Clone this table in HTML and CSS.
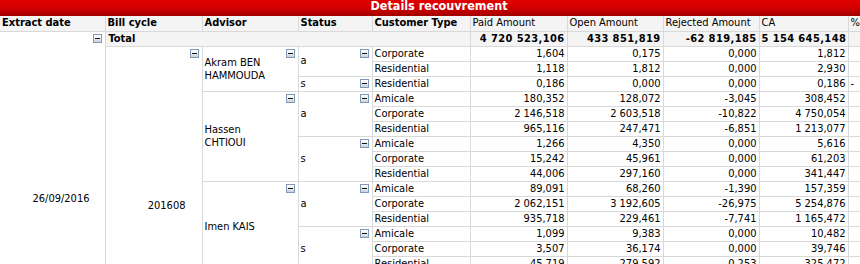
FILE: index.html
```html
<!DOCTYPE html>
<html lang="fr">
<head>
<meta charset="utf-8">
<title>Details recouvrement</title>
<link rel="stylesheet" href="styles.css">
</head>
<body>
<div class="pivot">
  <div class="caption">Details recouvrement</div>
  <table class="grid">
    <colgroup>
      <col class="c-date"><col class="c-bill"><col class="c-adv"><col class="c-stat"><col class="c-type">
      <col class="c-num"><col class="c-num2"><col class="c-num3"><col class="c-ca"><col class="c-pct">
    </colgroup>
    <thead>
      <tr>
        <th class="dim first">Extract date</th>
        <th class="dim">Bill cycle</th>
        <th class="dim">Advisor</th>
        <th class="dim">Status</th>
        <th class="dim">Customer Type</th>
        <th class="exp">Paid Amount</th>
        <th class="exp">Open Amount</th>
        <th class="exp">Rejected Amount</th>
        <th class="exp">CA</th>
        <th class="exp">%</th>
      </tr>
    </thead>
    <tbody>
      <tr class="total">
        <td class="date first" rowspan="16"><span class="tog"></span><div class="date-val">26/09/2016</div></td>
        <td class="total-label" colspan="4">Total</td>
        <td class="num">4 720 523,106</td>
        <td class="num">433 851,819</td>
        <td class="num">-62 819,185</td>
        <td class="num">5 154 645,148</td>
        <td class="pct"></td>
      </tr>
      <tr>
        <td class="bill" rowspan="15"><span class="tog"></span><div class="bill-val">201608</div></td>
        <td class="adv" rowspan="3"><span class="tog"></span>Akram BEN HAMMOUDA</td>
        <td class="stat" rowspan="2"><span class="tog"></span>a</td>
        <td class="type">Corporate</td>
        <td class="num">1,604</td><td class="num">0,175</td><td class="num">0,000</td><td class="num">1,812</td><td class="pct"></td>
      </tr>
      <tr>
        <td class="type">Residential</td>
        <td class="num">1,118</td><td class="num">1,812</td><td class="num">0,000</td><td class="num">2,930</td><td class="pct"></td>
      </tr>
      <tr>
        <td class="stat"><span class="tog"></span>s</td>
        <td class="type">Residential</td>
        <td class="num">0,186</td><td class="num">0,000</td><td class="num">0,000</td><td class="num">0,186</td><td class="pct">-</td>
      </tr>
      <tr>
        <td class="adv" rowspan="6"><span class="tog"></span>Hassen CHTIOUI</td>
        <td class="stat" rowspan="3"><span class="tog"></span>a</td>
        <td class="type">Amicale</td>
        <td class="num">180,352</td><td class="num">128,072</td><td class="num">-3,045</td><td class="num">308,452</td><td class="pct"></td>
      </tr>
      <tr>
        <td class="type">Corporate</td>
        <td class="num">2 146,518</td><td class="num">2 603,518</td><td class="num">-10,822</td><td class="num">4 750,054</td><td class="pct"></td>
      </tr>
      <tr>
        <td class="type">Residential</td>
        <td class="num">965,116</td><td class="num">247,471</td><td class="num">-6,851</td><td class="num">1 213,077</td><td class="pct"></td>
      </tr>
      <tr>
        <td class="stat" rowspan="3"><span class="tog"></span>s</td>
        <td class="type">Amicale</td>
        <td class="num">1,266</td><td class="num">4,350</td><td class="num">0,000</td><td class="num">5,616</td><td class="pct"></td>
      </tr>
      <tr>
        <td class="type">Corporate</td>
        <td class="num">15,242</td><td class="num">45,961</td><td class="num">0,000</td><td class="num">61,203</td><td class="pct"></td>
      </tr>
      <tr>
        <td class="type">Residential</td>
        <td class="num">44,006</td><td class="num">297,160</td><td class="num">0,000</td><td class="num">341,447</td><td class="pct"></td>
      </tr>
      <tr>
        <td class="adv" rowspan="6"><span class="tog"></span>Imen KAIS</td>
        <td class="stat" rowspan="3"><span class="tog"></span>a</td>
        <td class="type">Amicale</td>
        <td class="num">89,091</td><td class="num">68,260</td><td class="num">-1,390</td><td class="num">157,359</td><td class="pct"></td>
      </tr>
      <tr>
        <td class="type">Corporate</td>
        <td class="num">2 062,151</td><td class="num">3 192,605</td><td class="num">-26,975</td><td class="num">5 254,876</td><td class="pct"></td>
      </tr>
      <tr>
        <td class="type">Residential</td>
        <td class="num">935,718</td><td class="num">229,461</td><td class="num">-7,741</td><td class="num">1 165,472</td><td class="pct"></td>
      </tr>
      <tr>
        <td class="stat" rowspan="3"><span class="tog"></span>s</td>
        <td class="type">Amicale</td>
        <td class="num">1,099</td><td class="num">9,383</td><td class="num">0,000</td><td class="num">10,482</td><td class="pct"></td>
      </tr>
      <tr>
        <td class="type">Corporate</td>
        <td class="num">3,507</td><td class="num">36,174</td><td class="num">0,000</td><td class="num">39,746</td><td class="pct"></td>
      </tr>
      <tr>
        <td class="type">Residential</td>
        <td class="num">45,719</td><td class="num">279,592</td><td class="num">-0,253</td><td class="num">325,472</td><td class="pct"></td>
      </tr>
    </tbody>
  </table>
</div>
</body>
</html>
```

FILE: styles.css
```css
html, body {
  margin: 0;
  padding: 0;
  background: #ffffff;
  overflow: hidden;
}

body {
  font-family: "DejaVu Sans Condensed", "DejaVu Sans", sans-serif;
  font-size: 11px;
  color: #000000;
}

.pivot {
  width: 878px;
}

.caption {
  height: 16px;
  background: linear-gradient(to bottom, #e20000 0%, #d00000 50%, #a20000 100%);
  color: #ffffff;
  font-weight: bold;
  font-size: 12.5px;
  line-height: 12px;
  text-align: center;
}

.grid {
  border-collapse: collapse;
  table-layout: fixed;
  width: 878px;
}

.c-date { width: 105px; }
.c-bill { width: 97px; }
.c-adv { width: 96px; }
.c-stat { width: 74px; }
.c-type { width: 98px; }
.c-num { width: 97px; }
.c-num2 { width: 96px; }
.c-num3 { width: 96px; }
.c-ca { width: 89px; }
.c-pct { width: 30px; }

.grid tr {
  height: 15px;
}

.grid th,
.grid td {
  border: 1px solid #d9d9d9;
  padding: 0 2px;
  line-height: 14px;
  white-space: nowrap;
  overflow: hidden;
  text-align: left;
  vertical-align: middle;
}

.grid th {
  border-top: none;
  background: #f4f4f4;
  font-weight: normal;
}

.grid th.dim {
  font-weight: bold;
}

.grid .first {
  border-left: none;
}

.grid .total td {
  background: #f4f4f4;
  font-weight: bold;
}

.grid .total td.date {
  background: #ffffff;
  font-weight: normal;
}

.grid .total-label {
  padding-left: 3px;
}

.grid td.num {
  text-align: right;
}

.grid .total td.num {
  font-family: "DejaVu Sans Condensed", "DejaVu Sans", sans-serif;
  letter-spacing: 0.4px;
}

.grid td.date,
.grid td.bill,
.grid td.adv,
.grid td.stat {
  position: relative;
}

.grid td.date,
.grid td.bill {
  vertical-align: top;
  text-align: right;
}

.date-val {
  padding-top: 160px;
  padding-right: 13px;
}

.bill-val {
  padding-top: 152px;
  padding-right: 14px;
}

.grid td.adv {
  white-space: normal;
  line-height: 13px;
  padding-right: 22px;
}

.tog {
  position: absolute;
  top: 2px;
  right: 3px;
  width: 7px;
  height: 7px;
  border: 1px solid #8199b6;
  background: linear-gradient(to bottom, #ffffff 0%, #e3e8ee 60%, #c8d0da 100%);
}

.tog::after {
  content: "";
  position: absolute;
  left: 1px;
  top: 3px;
  width: 5px;
  height: 1px;
  background: #111111;
}
```
